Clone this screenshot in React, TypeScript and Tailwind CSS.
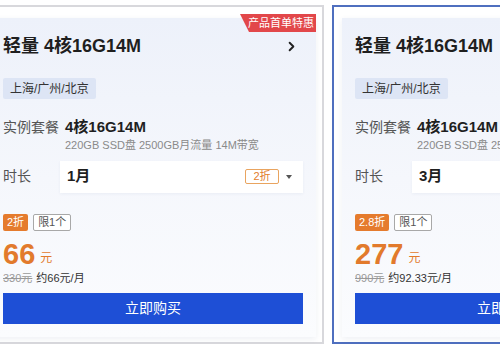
import { ChevronRight } from 'lucide-react';

type Plan = {
  months: string;
  discount: string;
  price: string;
  original: string;
  perMonth: string;
  active?: boolean;
  promo?: boolean;
};

const plans: Plan[] = [
  { months: '1月', discount: '2折', price: '66', original: '330元', perMonth: '约66元/月', promo: true },
  { months: '3月', discount: '2.8折', price: '277', original: '990元', perMonth: '约92.33元/月', active: true },
];

const PlanCard = ({ plan }: { plan: Plan }) => {
  return (
    <div
      className={
        plan.active
          ? 'w-[344px] shrink-0 border-2 border-[#4f6fbf] bg-white pt-[11px] pl-2 pr-[6px] pb-[5px]'
          : 'w-[344px] shrink-0 border-2 border-[#d8d8dc] bg-white pt-[11px] pl-2 pr-[6px] pb-[5px]'
      }
    >
      <div className="relative bg-gradient-to-b from-[#edf1fa] via-[#f5f7fc] to-[#fbfcfe] px-[13px] pt-[15px] pb-[13px] shadow-[0_2px_6px_rgba(40,60,120,0.08)]">
        {plan.promo && (
          <div className="absolute right-0 -top-[4px] flex h-[18px] w-[76px] items-center justify-center bg-[#e2474a] pl-[6px] text-[11px] leading-none text-white [clip-path:polygon(2px_0,100%_0,100%_100%,9px_100%,0_0)]">
            产品首单特惠
          </div>
        )}

        <div className="flex h-[26px] items-center justify-between">
          <div className="text-[18px] font-semibold leading-[26px] text-[#1f1f1f]">轻量 4核16G14M</div>
          <ChevronRight size={15} strokeWidth={3} className="mr-[4px] text-[#222]" />
        </div>

        <div className="mt-[19px] inline-flex h-[21px] items-center rounded-[2px] bg-[#dde5f5] px-[7px] text-[12px] text-[#333]">
          上海/广州/北京
        </div>

        <div className="mt-[17px] flex">
          <div className="w-[62px] shrink-0 text-[14px] leading-[20px] text-[#555]">实例套餐</div>
          <div>
            <div className="text-[15px] font-semibold leading-[20px] text-[#1f1f1f]">4核16G14M</div>
            <div className="text-[11px] leading-[16px] text-[#8a8a8a]">220GB SSD盘 2500GB月流量 14M带宽</div>
          </div>
        </div>

        <div className="mt-[8px] flex items-center">
          <div className="w-[57px] shrink-0 text-[14px] text-[#555]">时长</div>
          <div className="flex h-[32px] flex-1 items-center justify-between bg-white pl-[7px] pr-[11px] shadow-[0_1px_3px_rgba(40,60,120,0.06)]">
            <span className="text-[15px] font-semibold text-[#1f1f1f]">{plan.months}</span>
            <div className="flex items-center gap-[7px]">
              <span className="flex h-[15px] min-w-[34px] items-center justify-center rounded-[2px] border border-[#e9a45f] px-[4px] text-[11px] leading-none text-[#e27c2b]">
                {plan.discount}
              </span>
              <span className="h-0 w-0 border-x-[3px] border-t-[4px] border-x-transparent border-t-[#555]" />
            </div>
          </div>
        </div>

        <div className="mt-[21px] flex gap-[5px]">
          <span className="flex h-[17px] items-center rounded-[2px] bg-[#e57b2d] px-[4px] text-[11px] leading-none text-white">
            {plan.discount}
          </span>
          <span className="flex h-[17px] items-center rounded-[2px] border border-[#a8a8a8] bg-white px-[4px] text-[11px] leading-none text-[#555]">
            限1个
          </span>
        </div>

        <div className="mt-[12px] flex h-[22px] items-end gap-[5px] text-[#e27a2c]">
          <span className="text-[29px] font-semibold leading-[22px]">{plan.price}</span>
          <span className="text-[12px] leading-[14px]">元</span>
        </div>

        <div className="mt-[5px] flex gap-[4px] text-[11px] leading-[16px]">
          <span className="text-[#999] line-through">{plan.original}</span>
          <span className="text-[#333]">{plan.perMonth}</span>
        </div>

        <button className="mt-[7px] flex h-[31px] w-full items-center justify-center bg-[#1e4fd6] text-[14px] text-white">
          立即购买
        </button>
      </div>
    </div>
  );
};

export default function App() {
  return (
    <div
      className="h-[350px] w-[500px] overflow-hidden bg-white pt-[5px]"
      style={{ fontFamily: '"Liberation Sans", "Noto Sans CJK SC", sans-serif' }}
    >
      <div className="-ml-[20px] flex gap-2">
        {plans.map((p) => (
          <PlanCard key={p.months} plan={p} />
        ))}
      </div>
    </div>
  );
}
